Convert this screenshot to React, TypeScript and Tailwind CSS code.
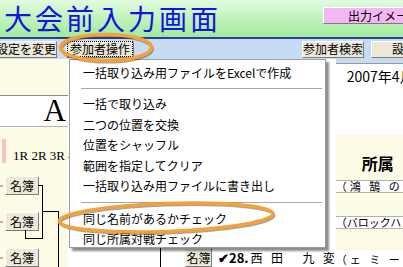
import React from "react";

const jp = "font-['Noto_Sans_CJK_JP','Noto_Sans',sans-serif]";

function Btn({ children, className = "" }: { children: React.ReactNode; className?: string }) {
  return (
    <div
      className={`h-[17px] flex items-center justify-center bg-[#ece9d8] border border-t-white border-l-white border-r-[#7c7c7c] border-b-[#7c7c7c] text-[12px] leading-none text-black whitespace-nowrap ${className}`}
    >
      {children}
    </div>
  );
}

const menuItems: (string | null)[] = [
  "一括取り込み用ファイルをExcelで作成",
  null,
  "一括で取り込み",
  "二つの位置を交換",
  "位置をシャッフル",
  "範囲を指定してクリア",
  "一括取り込み用ファイルに書き出し",
  null,
  "同じ名前があるかチェック",
  "同じ所属対戦チェック",
];

export default function App() {
  return (
    <div className={`relative w-[403px] h-[267px] overflow-hidden bg-white ${jp}`}>
      {/* title bar */}
      <header className="h-[37px] flex items-start justify-between bg-linear-to-b from-[#e2fbe0] to-[#9fea9a]">
        <h1 className="ml-[4px] mt-[1px] text-[28px] leading-[34px] tracking-[3px] font-normal text-[#1414dc] whitespace-nowrap">
          大会前入力画面
        </h1>
        <div className="mt-[7px] -mr-[14px] w-[94px] h-[17px] flex items-center pl-[24px] bg-[#f4b6f4] border border-t-white border-l-white border-r-[#7c7c7c] border-b-[#7c7c7c] text-[12px] leading-none text-black whitespace-nowrap">
          出力イメージ
        </div>
      </header>
      <div className="h-[2px] bg-[#2a3f9a]" />

      {/* toolbar */}
      <div className="h-[20px] flex items-center bg-[#c6dcf4]">
        <Btn className="-ml-[5px] w-[66px]">設定を変更</Btn>
        <Btn className="ml-[9px] w-[72px]">
          <span className="border border-dotted border-black px-[2px] py-[1px]">参加者操作</span>
        </Btn>
        <Btn className="ml-[168px] w-[68px]">参加者検索</Btn>
        <Btn className="ml-[7px] w-[60px] !justify-start pl-[20px]">設定保存</Btn>
      </div>

      {/* body */}
      <div className="flex h-[208px]">
        {/* left column */}
        <div className="w-[68px] flex flex-col">
          <div className="h-[38px] bg-[#fcfce6]" />
          <div className="h-px bg-[#8c8c8c]" />
          <div className="h-[30px] bg-white flex items-end justify-end pr-[2px] font-['Liberation_Serif',serif] text-[31px] leading-[30px] text-black">
            A
          </div>
          <div className="h-px bg-[#b4b4b4]" />
          <div className="relative flex-1 bg-[#fcfce6]">
            <div className="absolute left-[2px] top-[12px] w-[4px] h-[24px] bg-[#f6c4c4]" />
            <div className="pt-[23px] pl-[13px] font-['Liberation_Serif',serif] text-[13px] leading-[12px] text-black whitespace-nowrap">
              1R 2R 3R 4R
            </div>
            <div className="mt-[14px] flex flex-col gap-[17px]">
              {[0, 1, 2].map((i) => (
                <div key={i} className="flex items-center">
                  <div className="w-[3px] h-[2px] bg-[#f0a0a0]" />
                  <Btn className="ml-[2px] w-[34px] h-[19px]">名簿</Btn>
                </div>
              ))}
            </div>
            <svg className="absolute left-0 top-0 overflow-visible" width="68" height="138">
              <g stroke="#000" strokeWidth="1" fill="none" shapeRendering="crispEdges">
                <path d="M38 58.5H42.5V111.5" />
                <path d="M25.5 103V111.5H42.5" />
                <path d="M42.5 84.5H58.5V140" />
              </g>
            </svg>
          </div>
        </div>

        {/* middle column (mostly under menu) */}
        <div className="flex-1 flex flex-col justify-end bg-white">
          <div className="h-[19px] flex items-center text-[12px] leading-none text-black whitespace-nowrap">
            <div className="w-[92px]" />
            <div className="w-[25px] h-full border-l border-black" />
            <Btn className="w-[27px] h-[19px]">名簿</Btn>
            <span className="ml-[6px] font-bold text-[13px]">✔28.</span>
            <span className="ml-[2px] tracking-[1px]">西&nbsp;&nbsp;田&nbsp;&nbsp;&nbsp;&nbsp;&nbsp;九&nbsp;&nbsp;変</span>
          </div>
        </div>

        {/* right column */}
        <div className="w-[76px] flex flex-col text-black">
          <div className="h-[4px] bg-[#c6dcf4]" />
          <div className="h-[72px] bg-white border-t border-[#9a9a9a] pt-[5px] pl-[11px] text-[14px] leading-none whitespace-nowrap">
            2007年4月
          </div>
          <div className="h-[45px] bg-[#fcfce6] flex justify-center pt-[20px] pl-[8px] text-[16px] leading-none font-bold">
            所属
          </div>
          <div className="h-[13px] bg-white border-y border-[#b0b0b0] flex items-center text-[11px] leading-none tracking-[3px] whitespace-nowrap">
            （鴻 鵠 の ユ
          </div>
          <div className="h-[23px] bg-[#fcfce6]" />
          <div className="h-[13px] bg-white border-y border-[#b0b0b0] flex items-center text-[11px] leading-none whitespace-nowrap">
            （バロックハンド
          </div>
          <div className="h-[22px] bg-[#fcfce6]" />
          <div className="flex-1 bg-white flex items-center text-[11px] leading-none tracking-[3px] whitespace-nowrap">
            （ェ ミ ー ル
          </div>
        </div>
      </div>

      {/* dropdown menu */}
      <div className="absolute left-[69px] top-[59px] w-[257px] h-[189px] bg-white border border-[#9c9c9c] shadow-[3px_3px_2px_rgba(0,0,0,0.45)] pt-[3px] text-[12px] leading-none text-black">
        {menuItems.map((item, i) =>
          item === null ? (
            <div key={i} className={`${i === 1 ? "h-[10.5px]" : "h-[12px]"} flex items-center ml-[11px] mr-[3px]`}>
              <div className="h-px w-full bg-[#a8a8a8]" />
            </div>
          ) : (
            <div key={i} className="h-[20.5px] flex items-center pl-[13px] whitespace-nowrap">
              {item}
            </div>
          ),
        )}
      </div>

      {/* hand-drawn highlight rings */}
      <svg className="absolute inset-0 pointer-events-none" width="403" height="267">
        <g fill="none">
          <ellipse cx="107" cy="49" rx="45.5" ry="13" stroke="rgba(70,50,20,0.45)" strokeWidth="3" />
          <ellipse cx="106" cy="47.5" rx="45.5" ry="13" stroke="#f3a23a" strokeWidth="3.5" />
          <g transform="rotate(-2 166 217)">
            <ellipse cx="167" cy="219" rx="107" ry="14" stroke="rgba(70,50,20,0.45)" strokeWidth="3" />
            <ellipse cx="166" cy="217.5" rx="107" ry="14" stroke="#f3a23a" strokeWidth="3.5" />
          </g>
        </g>
      </svg>
    </div>
  );
}
